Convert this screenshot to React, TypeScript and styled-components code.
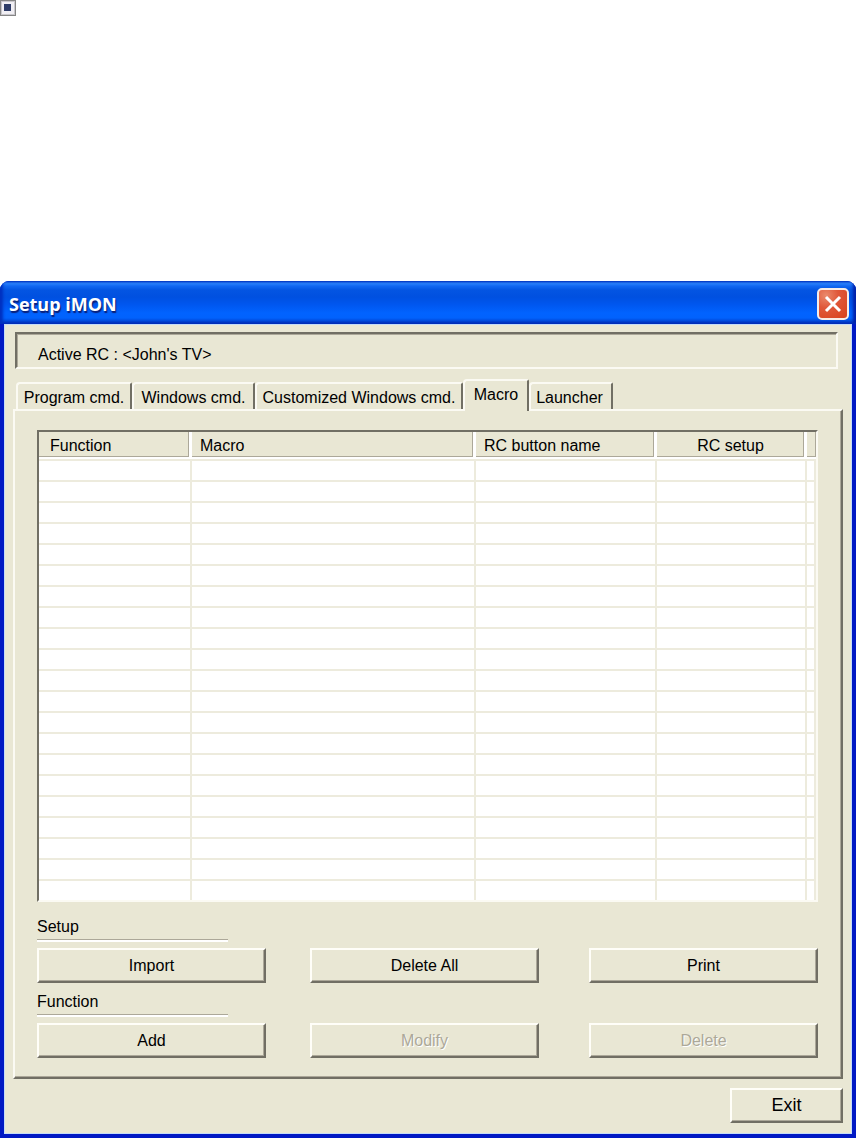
import React from "react";
import styled, { createGlobalStyle, css } from "styled-components";

const face = "#e9e7d4";
const light = "#fbfaf3";
const dark = "#716f64";
const mid = "#aca899";
const grid = "#edebdd";

const GlobalStyle = createGlobalStyle`
  *, *::before, *::after { box-sizing: border-box; }
  body { margin: 0; background: #fff; }
  body, button, table { font-family: "Liberation Sans", Arial, sans-serif; font-size: 16px; line-height: 20px; color: #000; }
`;

const Page = styled.div`
  display: flex;
  flex-direction: column;
  gap: 265px;
`;

const Marker = styled.svg`
  display: block;
  width: 16px;
  height: 16px;
`;

const Window = styled.main`
  display: flex;
  flex-direction: column;
  border-radius: 9px 9px 0 0;
  overflow: hidden;
  background: #0019c4;
`;

const TitleBar = styled.header`
  display: flex;
  align-items: center;
  justify-content: space-between;
  height: 43px;
  padding: 3px 7px 0 9px;
  background: linear-gradient(
    #0a50d8 0, #2f86fb 2px, #1268f2 5px, #0455e2 9px, #0050e0 16px,
    #0057f0 24px, #0163ff 32px, #0162fd 37px, #0148d8 40px, #002fb4 43px
  );
  box-shadow: inset 3px 0 3px #0030c0, inset -3px 0 3px #0020a8;
`;

const Title = styled.h1`
  margin: 0;
  font: bold 18px/24px "Open Sans", "Trebuchet MS", sans-serif;
  color: #fff;
  text-shadow: 1px 2px 1px #0a1f78;
`;

const CloseButton = styled.button`
  display: block;
  width: 32px;
  height: 32px;
  padding: 0;
  border: 2px solid #f6ece8;
  border-radius: 5px;
  background: radial-gradient(circle at 25% 20%, #ea8a6c 0, #e0583a 40%, #d8411c 100%);

  svg { display: block; width: 28px; height: 28px; }
`;

const Client = styled.div`
  display: flex;
  flex-direction: column;
  margin: 0 4px 5px;
  padding: 7px 8px 10px;
  border: 1px solid #c4dcf8;
  background: ${face};
`;

const ActiveBox = styled.div`
  height: 37px;
  margin: 0 5px 0 2px;
  padding: 11px 21px 0;
  border: 2px solid;
  border-color: ${dark} ${light} ${light} ${dark};
  box-shadow: inset 1px 1px 0 ${mid};
`;

const Tabs = styled.div`
  display: flex;
  align-items: flex-end;
  height: 40px;
  padding-left: 3px;
`;

const Tab = styled.button<{ $width: number; $active?: boolean }>`
  width: ${(p) => p.$width}px;
  height: 27px;
  padding: 2px 0 0;
  border: 2px solid ${light};
  border-right-color: ${dark};
  border-bottom: 0;
  border-radius: 4px 2px 0 0;
  background: ${face};
  text-align: center;
  white-space: nowrap;
  &:last-child { padding-right: 3px; }
  ${(p) =>
    p.$active &&
    css`
      position: relative;
      height: 32px;
      padding-bottom: 5px;
      margin-bottom: -2px;
    `}
`;

const Panel = styled.section`
  padding: 19px 23px 19px 22px;
  border: 2px solid;
  border-color: ${light} ${dark} ${dark} ${light};
  box-shadow: inset -1px -1px 0 ${mid};
`;

const ListView = styled.div`
  height: 472px;
  overflow: hidden;
  border: 2px solid;
  border-color: ${dark} ${light} ${light} ${dark};
  background: #fff;
`;

const Table = styled.table`
  width: 100%;
  table-layout: fixed;
  border-collapse: separate;
  border-spacing: 0;

  col:nth-child(1) { width: 153px; }
  col:nth-child(3) { width: 181px; }
  col:nth-child(4) { width: 150px; }
  col:nth-child(5) { width: 9px; }
`;

const HeadCell = styled.th<{ $center?: boolean }>`
  height: 27px;
  padding: 4px 8px 1px;
  border-right: 3px solid #fff;
  border-bottom: 2px solid #fff;
  background: ${face};
  box-shadow: inset -1px -1px 0 ${mid};
  font-weight: normal;
  text-align: ${(p) => (p.$center ? "center" : "left")};
  white-space: nowrap;
  &:first-child { padding-left: 11px; }
  &:last-child { padding: 0; border-right: 0; }
`;

const Cell = styled.td<{ $first?: boolean }>`
  height: 21px;
  padding: 0;
  border-right: 2px solid ${grid};
  border-bottom: 2px solid ${grid};
  ${(p) => p.$first && css`height: 23px; border-top: 2px solid ${grid};`}
`;

const Group = styled.fieldset`
  min-width: 0;
  margin: 0;
  padding: 0;
  border: 0;
`;

const GroupLabel = styled.legend`
  width: 191px;
  height: 25px;
  padding: 0;
  border-bottom: 2px solid #fff;
  box-shadow: inset 0 -1px 0 ${mid};
`;

const Groups = styled.div`
  display: flex;
  flex-direction: column;
  gap: 9px;
  padding-top: 15px;
`;

const ButtonRow = styled.div`
  display: grid;
  grid-template-columns: 229fr 44fr 229fr 50fr 229fr;
  padding-top: 6px;

  & > :nth-child(2) { grid-column: 3; }
  & > :nth-child(3) { grid-column: 5; }
`;

const Button = styled.button<{ $large?: boolean }>`
  height: 35px;
  padding: 0;
  border: 2px solid;
  border-color: #fffef8 ${dark} ${dark} #fffef8;
  background: ${face};
  box-shadow: inset -1px -1px 0 ${mid};
  ${(p) => p.$large && css`width: 113px; padding-bottom: 2px; font-size: 18px;`}
  &:disabled { color: ${mid}; text-shadow: 1px 1px 0 #fff; }
`;

const Footer = styled.footer`
  display: flex;
  justify-content: flex-end;
  padding-top: 9px;
`;

const tabs = [
  { name: "Program cmd.", width: 116 },
  { name: "Windows cmd.", width: 123 },
  { name: "Customized Windows cmd.", width: 208 },
  { name: "Macro", width: 66, active: true },
  { name: "Launcher", width: 84 },
];

const groups = [
  { name: "Setup", buttons: [["Import"], ["Delete All"], ["Print"]] },
  { name: "Function", buttons: [["Add"], ["Modify", "off"], ["Delete", "off"]] },
];

const columns = ["Function", "Macro", "RC button name", "RC setup", ""];
const rows = Array.from({ length: 21 }, (_, i) => i);

export default function App() {
  return (
    <Page>
      <GlobalStyle />
      <Marker viewBox="0 0 16 16" aria-hidden="true">
        <path d="M0 0h16v16H0z" fill="#858585" />
        <path d="M1 1h14v14H1z" fill="#c9c7cc" />
        <path d="M2 2h12v12H2z" fill="#f1eff4" />
        <path d="M4 4h7v7H4z" fill="#2e3c68" />
      </Marker>
      <Window>
        <TitleBar>
          <Title>Setup iMON</Title>
          <CloseButton aria-label="Close">
            <svg viewBox="0 0 28 28" aria-hidden="true">
              <path d="M7 7l14 14M21 7L7 21" stroke="#fff" strokeWidth="3" fill="none" />
            </svg>
          </CloseButton>
        </TitleBar>
        <Client>
          <ActiveBox>Active RC : &lt;John's TV&gt;</ActiveBox>
          <Tabs role="tablist">
            {tabs.map((t) => (
              <Tab key={t.name} role="tab" aria-selected={!!t.active} $width={t.width} $active={t.active}>
                {t.name}
              </Tab>
            ))}
          </Tabs>
          <Panel role="tabpanel" aria-label="Macro">
            <ListView>
              <Table>
                <colgroup>
                  {columns.map((c) => <col key={c} />)}
                </colgroup>
                <thead>
                  <tr>
                    {columns.map((c) => (
                      <HeadCell key={c} $center={c === "RC setup"}>{c}</HeadCell>
                    ))}
                  </tr>
                </thead>
                <tbody>
                  {rows.map((r) => (
                    <tr key={r}>
                      {columns.map((c) => <Cell key={c} $first={r === 0} />)}
                    </tr>
                  ))}
                </tbody>
              </Table>
            </ListView>
            <Groups>
              {groups.map((g) => (
                <Group key={g.name}>
                  <GroupLabel>{g.name}</GroupLabel>
                  <ButtonRow>
                    {g.buttons.map(([label, off]) => (
                      <Button key={label} disabled={!!off}>{label}</Button>
                    ))}
                  </ButtonRow>
                </Group>
              ))}
            </Groups>
          </Panel>
          <Footer>
            <Button $large>Exit</Button>
          </Footer>
        </Client>
      </Window>
    </Page>
  );
}
